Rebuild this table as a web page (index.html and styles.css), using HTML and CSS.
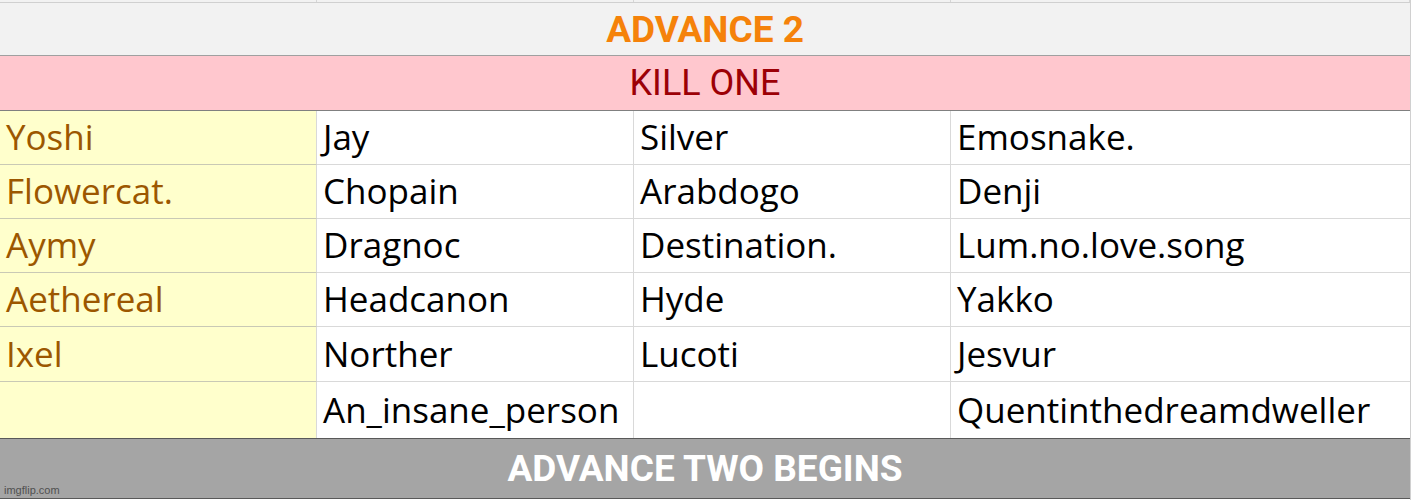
FILE: index.html
```html
<!DOCTYPE html>
<html>
<head>
<meta charset="utf-8">
<link rel="stylesheet" href="styles.css">
</head>
<body>
<div class="sheet">
  <div class="strip">
    <div class="strip-cell"></div><div class="strip-cell"></div><div class="strip-cell"></div><div class="strip-cell"></div>
  </div>
  <div class="band band-title">ADVANCE 2</div>
  <div class="band band-kill">KILL ONE</div>
  <div class="grid">
    <div class="cell lead">Yoshi</div><div class="cell">Jay</div><div class="cell">Silver</div><div class="cell">Emosnake.</div>
    <div class="cell lead">Flowercat.</div><div class="cell">Chopain</div><div class="cell">Arabdogo</div><div class="cell">Denji</div>
    <div class="cell lead">Aymy</div><div class="cell">Dragnoc</div><div class="cell">Destination.</div><div class="cell">Lum.no.love.song</div>
    <div class="cell lead">Aethereal</div><div class="cell">Headcanon</div><div class="cell">Hyde</div><div class="cell">Yakko</div>
    <div class="cell lead r5">Ixel</div><div class="cell r5">Norther</div><div class="cell r5">Lucoti</div><div class="cell r5">Jesvur</div>
    <div class="cell lead r6"></div><div class="cell r6">An_insane_person</div><div class="cell r6"></div><div class="cell r6">Quentinthedreamdweller</div>
  </div>
  <div class="band band-begin">ADVANCE TWO BEGINS<span class="watermark">imgflip.com</span></div>
</div>
</body>
</html>
```

FILE: styles.css
```css
html, body {
  margin: 0;
  padding: 0;
  background: #ffffff;
}
.sheet {
  width: 1410px;
  height: 500px;
  border-right: 1px solid #d0d0d0;
  overflow: hidden;
}
.strip {
  display: grid;
  grid-template-columns: 317px 317px 317px 1fr;
  height: 2px;
  border-bottom: 1px solid #d0d0d0;
  background: #f2f2f2;
}
.strip-cell {
  border-right: 1px solid #d6d6d6;
}
.band {
  display: flex;
  align-items: center;
  justify-content: center;
  font-family: Roboto, "Liberation Sans", sans-serif;
  font-size: 36px;
  line-height: 1;
}
.band-title {
  height: 52px;
  background: #f2f2f2;
  border-bottom: 1px solid #a0a0a0;
  color: #f5820a;
  font-weight: 700;
  font-size: 37px;
}
.band-kill {
  height: 54px;
  background: #ffc7ce;
  border-bottom: 1px solid #808080;
  color: #9c0006;
}
.grid {
  display: grid;
  grid-template-columns: 317px 317px 317px 1fr;
  grid-template-rows: 54px 54px 54px 54px 55px 56px;
}
.cell {
  box-sizing: border-box;
  border-right: 1px solid #d9d9d9;
  border-bottom: 1px solid #d9d9d9;
  padding: 0 0 2px 6px;
  font-family: "Open Sans", "Noto Sans", sans-serif;
  font-size: 35px;
  color: #000000;
  display: flex;
  align-items: center;
  white-space: nowrap;
}
.cell:nth-child(4n) {
  border-right: none;
}
.cell.lead {
  background: #ffffcc;
  color: #9c5700;
  padding-left: 6px;
  border-right-color: #d9d9d9;
  border-bottom-color: #c9c9b5;
}
.cell.r6 {
  border-bottom: none;
}
.band-begin {
  position: relative;
  height: 59px;
  background: #a5a5a5;
  border-top: 1px solid #595959;
  border-bottom: 1px solid #595959;
  color: #ffffff;
  font-weight: 700;
  font-size: 37px;
}
.watermark {
  position: absolute;
  left: 4px;
  bottom: 2px;
  font-family: "Liberation Sans", Arial, sans-serif;
  font-weight: 400;
  font-size: 11px;
  color: #505050;
}
```
